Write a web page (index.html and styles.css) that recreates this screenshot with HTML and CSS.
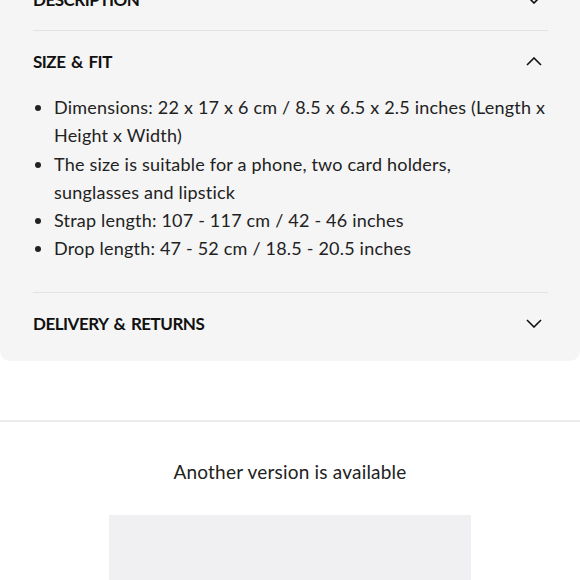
FILE: index.html
```html
<!DOCTYPE html>
<html>
<head>
<meta charset="utf-8">
<link rel="stylesheet" href="styles.css">
</head>
<body>
<section class="card">
  <div class="acc-row">
    <h3 class="acc-title">Description</h3>
    <svg class="chev" width="16" height="9" viewBox="0 0 16 9"><path d="M1 1 L8 8 L15 1" fill="none" stroke="#111" stroke-width="1.6"/></svg>
  </div>
  <div class="acc-item">
    <div class="acc-row">
      <h3 class="acc-title">Size &amp; Fit</h3>
      <svg class="chev" width="16" height="9" viewBox="0 0 16 9"><path d="M1 8 L8 1 L15 8" fill="none" stroke="#111" stroke-width="1.6"/></svg>
    </div>
    <ul class="acc-list">
      <li>Dimensions: 22 x 17 x 6 cm / 8.5 x 6.5 x 2.5 inches (Length x Height x Width)</li>
      <li>The size is suitable for a phone, two card holders,<br>sunglasses and lipstick</li>
      <li>Strap length: 107 - 117 cm / 42 - 46 inches</li>
      <li>Drop length: 47 - 52 cm / 18.5 - 20.5 inches</li>
    </ul>
  </div>
  <div class="acc-item">
    <div class="acc-row">
      <h3 class="acc-title">Delivery &amp; Returns</h3>
      <svg class="chev" width="16" height="9" viewBox="0 0 16 9"><path d="M1 1 L8 8 L15 1" fill="none" stroke="#111" stroke-width="1.6"/></svg>
    </div>
  </div>
</section>
<section class="versions">
  <p class="versions-title">Another version is available</p>
  <div class="version-thumb"></div>
</section>
</body>
</html>
```
FILE: styles.css
```css
html, body {
  margin: 0;
  padding: 0;
  background: #ffffff;
}
body {
  font-family: Lato, "Open Sans", sans-serif;
  color: #222;
  overflow: hidden;
  height: 580px;
}
.card {
  background: #f5f5f5;
  margin-top: -31px;
  padding: 0 32px 7px 33px;
  border-radius: 0 0 10px 10px;
}
.acc-row {
  height: 61px;
  display: flex;
  align-items: center;
  justify-content: space-between;
  padding-right: 6px;
}
.acc-item {
  border-top: 1px solid #e2e2e2;
}
.acc-title {
  margin: 0;
  font-family: Lato, sans-serif;
  font-weight: 700;
  font-size: 17px;
  text-transform: uppercase;
  letter-spacing: -0.5px;
  word-spacing: 2px;
  color: #111;
}
.chev {
  display: block;
}
.acc-list {
  margin: 0;
  padding: 1px 0 29px 21px;
  font-size: 18px;
  letter-spacing: 0.2px;
  line-height: 28.3px;
  color: #222;
}
.versions {
  margin-top: 59px;
  border-top: 2px solid #ebebeb;
  display: flex;
  flex-direction: column;
  align-items: center;
}
.versions-title {
  margin: 38px 0 0;
  font-size: 19px;
  letter-spacing: 0.2px;
  line-height: 24px;
  color: #222;
}
.version-thumb {
  margin-top: 31px;
  width: 362px;
  height: 120px;
  background: #f0f0f2;
}
```
